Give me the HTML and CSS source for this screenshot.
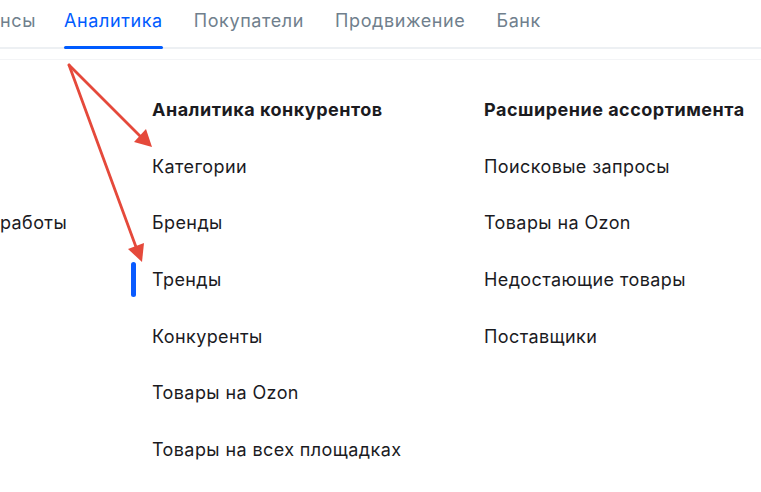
FILE: index.html
```html
<!DOCTYPE html>
<html lang="ru">
<head>
<meta charset="utf-8">
<link rel="stylesheet" href="styles.css">
</head>
<body>
<header class="tabs">
  <span class="tab tab-cut">нсы</span>
  <span class="tab active">Аналитика</span>
  <span class="tab">Покупатели</span>
  <span class="tab">Продвижение</span>
  <span class="tab">Банк</span>
</header>
<div class="sep"></div>
<main class="menu">
  <div class="col col0">
    <div class="head"></div>
    <div class="item"></div>
    <div class="item">работы</div>
  </div>
  <div class="col col1">
    <div class="head">Аналитика конкурентов</div>
    <div class="item">Категории</div>
    <div class="item">Бренды</div>
    <div class="item current">Тренды</div>
    <div class="item">Конкуренты</div>
    <div class="item">Товары на Ozon</div>
    <div class="item">Товары на всех площадках</div>
  </div>
  <div class="col col2">
    <div class="head">Расширение ассортимента</div>
    <div class="item">Поисковые запросы</div>
    <div class="item">Товары на Ozon</div>
    <div class="item">Недостающие товары</div>
    <div class="item">Поставщики</div>
  </div>
</main>
<svg class="arrows" width="761" height="492" viewBox="0 0 761 492">
  <g stroke="#e5493b" stroke-width="2.8" stroke-linecap="round" fill="none">
    <line x1="69" y1="65" x2="141" y2="137"/>
    <line x1="69" y1="65" x2="136" y2="247"/>
  </g>
  <g fill="#e5493b">
    <polygon points="152,147 134,142 146,129"/>
    <polygon points="142,262 128,249 144,243"/>
  </g>
</svg>
</body>
</html>
```
FILE: styles.css
```css
html, body {
  margin: 0;
  padding: 0;
  background: #ffffff;
  width: 761px;
  height: 492px;
  overflow: hidden;
  font-family: Inter, "Noto Sans", sans-serif;
  font-size: 18px;
  letter-spacing: 0.4px;
  color: #1b1b1f;
  position: relative;
}
.tabs {
  display: flex;
  gap: 31px;
  height: 47px;
  border-bottom: 2px solid #edf0f3;
  box-sizing: content-box;
}
.tab {
  position: relative;
  line-height: 42px;
  color: #707f8d;
  white-space: nowrap;
  letter-spacing: 0.6px;
}
.tab-cut {
  margin-right: -3px;
}
.tab.active {
  color: #005bff;
}
.tab.active::after {
  content: "";
  position: absolute;
  left: 0;
  right: 0;
  bottom: -2px;
  height: 3px;
  border-radius: 2px;
  background: #005bff;
}
.sep {
  margin-top: 10px;
  height: 1px;
  background: #f3f4f6;
}
.menu {
  display: flex;
  padding-top: 35px;
}
.col {
  display: flex;
  flex-direction: column;
}
.col0 {
  width: 152px;
}
.col1 {
  width: 332px;
}
.head,
.item {
  height: 56.67px;
  line-height: 30px;
  white-space: nowrap;
  position: relative;
}
.head {
  font-weight: 700;
  letter-spacing: 0.5px;
}
.item.current::before {
  content: "";
  position: absolute;
  left: -21px;
  top: -3px;
  width: 5px;
  height: 35px;
  border-radius: 3px;
  background: #0a5bff;
}
.arrows {
  position: absolute;
  left: 0;
  top: 0;
  pointer-events: none;
}
```
